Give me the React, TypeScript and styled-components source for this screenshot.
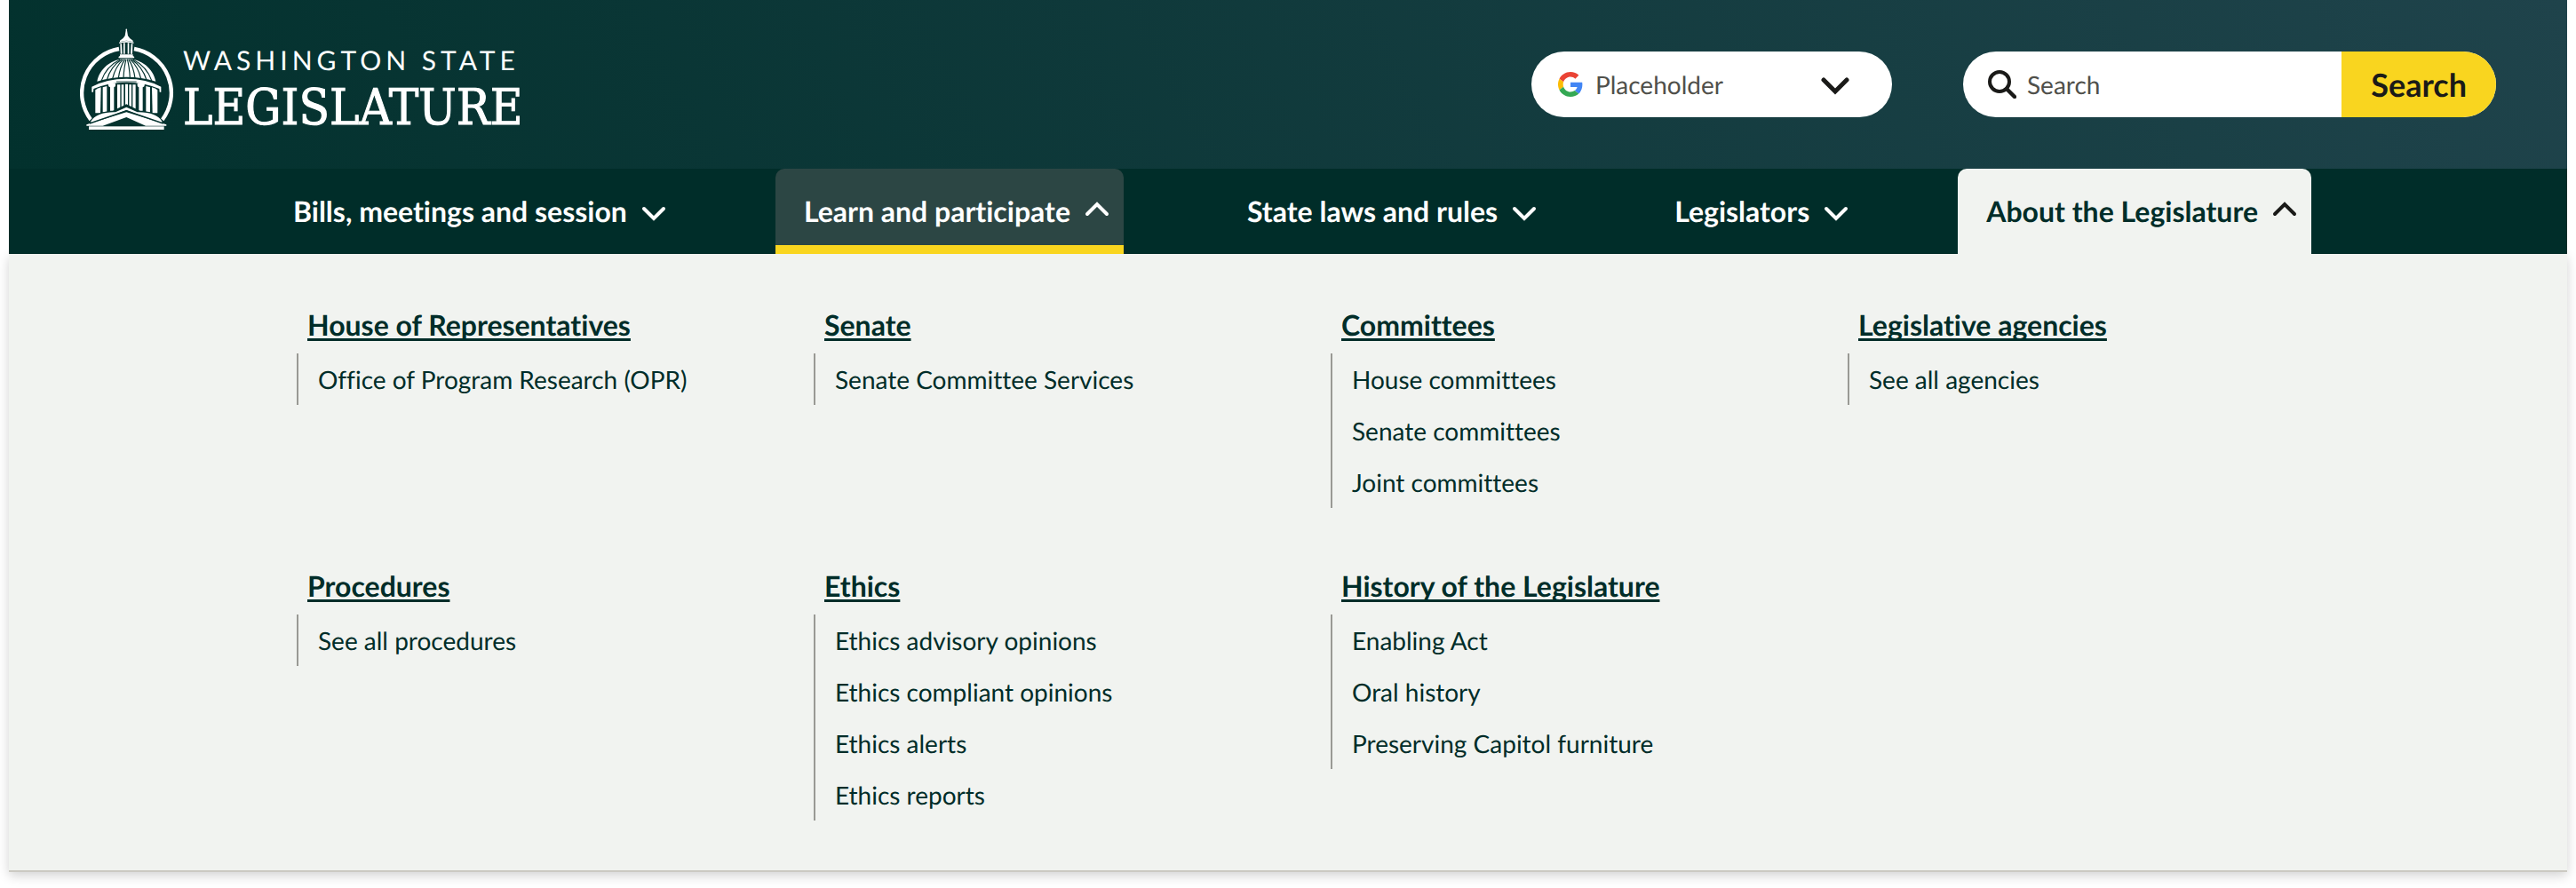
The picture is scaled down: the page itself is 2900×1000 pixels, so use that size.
import React from 'react';
import styled, { createGlobalStyle } from 'styled-components';

const color = {
  deep: '#002d29',
  ink: '#1a1a18',
  muted: '#50504b',
  yellow: '#f9d51f',
  panel: '#f1f3f0',
  hover: '#2c4644',
  rule: '#999994',
  edge: '#cbc9c2',
};

const GlobalStyle = createGlobalStyle`
  *, *::before, *::after { box-sizing: border-box; }
  body {
    margin: 0;
    background: #fff;
    font-family: Lato, 'Liberation Sans', sans-serif;
    font-variant-ligatures: none;
    text-rendering: geometricPrecision;
    color: ${color.deep};
  }
  button, input, select { text-rendering: inherit; }
`;

const Page = styled.div`
  padding: 0 10px 32px;
`;

const Masthead = styled.header`
  display: flex;
  align-items: center;
  gap: 80px;
  height: 190px;
  padding: 0 80px;
  background: linear-gradient(62deg, #02312d, #1f434b);
`;

const Brand = styled.a`
  display: flex;
  align-items: flex-start;
  gap: 10px;
  margin-right: auto;
  padding-bottom: 12px;
  color: #fff;
  text-decoration: none;
`;

const Wordmark = styled.span`
  display: flex;
  flex-direction: column;
  gap: 12px;
  padding-top: 18px;
`;

const WordmarkTop = styled.span`
  font-size: 30px;
  line-height: 36px;
  letter-spacing: 5px;
  white-space: nowrap;
`;

const WordmarkBottom = styled.span`
  font-family: 'DejaVu Serif Condensed', 'Liberation Serif', serif;
  font-size: 56px;
  line-height: 48px;
  -webkit-text-stroke: 1px #fff;
  white-space: nowrap;
`;

const Pill = styled.div`
  display: flex;
  align-items: center;
  height: 74px;
  border-radius: 37px;
  background: #fff;
  overflow: hidden;
`;

const SelectPill = styled(Pill)`
  width: 406px;
  gap: 14px;
  padding: 0 48px 0 30px;
`;

const SearchPill = styled(Pill).attrs({ as: 'form' })`
  width: 600px;
  gap: 12px;
  padding-left: 28px;
`;

const Select = styled.select`
  flex: 1;
  min-width: 0;
  height: 100%;
  padding: 0;
  border: 0;
  appearance: none;
  background: transparent;
  font: 400 28px/34px Lato, sans-serif;
  color: ${color.muted};
`;

const SearchInput = styled.input`
  flex: 1;
  min-width: 0;
  height: 100%;
  padding: 0;
  border: 0;
  outline: 0;
  background: transparent;
  font: 400 28px/34px Lato, sans-serif;
  color: ${color.ink};
  &::placeholder { color: ${color.muted}; opacity: 1; }
`;

const SearchButton = styled.button`
  height: 100%;
  padding: 0 33px;
  border: 0;
  background: ${color.yellow};
  font: 700 36px/44px Lato, sans-serif;
  color: ${color.ink};
`;

const NavBar = styled.nav`
  position: relative;
  background: ${color.deep};
`;

const NavList = styled.ul`
  display: flex;
  justify-content: space-between;
  width: 80%;
  margin: 0 auto;
  padding: 0;
  list-style: none;
`;

type TabState = 'closed' | 'hover' | 'open';

const Tab = styled.button<{ $state: TabState }>`
  display: flex;
  align-items: center;
  gap: 14px;
  height: 96px;
  padding: 0 14px 0 32px;
  border: 0;
  border-radius: ${p => (p.$state === 'closed' ? '0' : '10px 10px 0 0')};
  background: ${p =>
    p.$state === 'open' ? color.panel : p.$state === 'hover' ? color.hover : 'transparent'};
  box-shadow: ${p => (p.$state === 'hover' ? `inset 0 -10px 0 ${color.yellow}` : 'none')};
  color: ${p => (p.$state === 'open' ? color.deep : '#fff')};
  font: 700 32px/40px Lato, sans-serif;
  font-variant-ligatures: none;
  white-space: nowrap;
`;

const ChevronSvg = styled.svg<{ $up?: boolean; $dark?: boolean }>`
  flex: none;
  width: 32px;
  height: 32px;
  fill: none;
  stroke: ${p => (p.$dark ? color.ink : '#fff')};
  transform: ${p => (p.$up ? 'rotate(180deg)' : 'none')};
`;

const Panel = styled.main`
  display: grid;
  grid-template-columns: repeat(4, 1fr);
  gap: 64px 48px;
  padding: 56px 300px;
  border-bottom: 2px solid ${color.edge};
  background: ${color.panel};
  box-shadow: 0 4px 12px rgba(0, 0, 0, 0.18);
`;

const Group = styled.section`
  padding-left: 24px;
`;

const GroupTitle = styled.h2`
  margin: 0 0 8px;
  padding-left: 12px;
  font-size: 32px;
  line-height: 48px;
  white-space: nowrap;
`;

const GroupTitleLink = styled.a`
  color: inherit;
  text-decoration: underline;
  text-decoration-thickness: 3px;
  text-decoration-skip-ink: none;
  text-underline-offset: 3px;
`;

const LinkList = styled.ul`
  margin: 0;
  padding: 0 0 0 22px;
  border-left: 2px solid ${color.rule};
  list-style: none;
`;

const ListLink = styled.a`
  display: block;
  font-size: 28px;
  line-height: 58px;
  white-space: nowrap;
  color: inherit;
  text-decoration: none;
`;

function Chevron({ up, dark, bold }: { up?: boolean; dark?: boolean; bold?: boolean }) {
  return (
    <ChevronSvg viewBox="0 0 32 32" $up={up} $dark={dark} aria-hidden="true">
      <path
        d={bold ? 'M3 11 L16 24 L29 11' : 'M5 13 L16 24 L27 13'}
        strokeWidth={bold ? 5 : 4}
        strokeLinecap="round"
      />
    </ChevronSvg>
  );
}

function GoogleMark() {
  return (
    <svg width="28" height="28" viewBox="0 0 48 48" aria-hidden="true">
      <path fill="#EA4335" d="M24 9.5c3.54 0 6.71 1.22 9.21 3.6l6.85-6.85C35.9 2.38 30.47 0 24 0 14.62 0 6.51 5.38 2.56 13.22l7.98 6.19C12.43 13.72 17.74 9.5 24 9.5z" />
      <path fill="#4285F4" d="M46.98 24.55c0-1.57-.15-3.09-.38-4.55H24v9.02h12.94c-.58 2.96-2.26 5.48-4.78 7.18l7.73 6c4.51-4.18 7.09-10.36 7.09-17.65z" />
      <path fill="#FBBC05" d="M10.53 28.59c-.48-1.45-.76-2.99-.76-4.59s.27-3.14.76-4.59l-7.98-6.19C.92 16.46 0 20.12 0 24c0 3.88.92 7.54 2.56 10.78l7.97-6.19z" />
      <path fill="#34A853" d="M24 48c6.48 0 11.93-2.13 15.89-5.81l-7.73-6c-2.15 1.45-4.92 2.3-8.16 2.3-6.26 0-11.57-4.22-13.47-9.91l-7.98 6.19C6.51 42.62 14.62 48 24 48z" />
    </svg>
  );
}

function Magnifier() {
  return (
    <svg width="32" height="32" viewBox="0 0 32 32" fill="none" stroke={color.ink} aria-hidden="true">
      <circle cx="13" cy="13" r="11" strokeWidth="4" />
      <path d="M21 21 L30 30" strokeWidth="4.5" strokeLinecap="round" />
    </svg>
  );
}

function CapitolDome() {
  const bg = '#05332f';
  return (
    <svg width="106" height="114" viewBox="30 20 318 342" aria-hidden="true">
      <g fill="none" stroke="#fff" strokeWidth="13">
        <path d="M162 89 A151 151 0 0 0 67 329" />
        <path d="M213 89 A151 151 0 0 1 308 329" />
      </g>
      <g fill="#fff">
        <circle cx="187" cy="24" r="2.5" />
        <path d="M185.500 24 h3 L192 45 Q196 54 209 61 V66 Q187 56 165 66 V61 Q178 54 182 45 Z" />
        <path d="M162 67 Q187 57 212 67 L211 71 Q187 63 163 71 Z" />
        <path d="M166 72 h5 l2 34 h-6 Z M177 69 h5 v37 h-5 Z M191 69 h5 v37 h-5 Z M203 72 h5 l-1 34 h-6 Z" />
        <path d="M165 108 h44 v5 q5 1 5 7 h-54 q0 -6 5 -7 Z" />
        <path d="M88 199 C96 157 135 122 187 122 C239 122 278 157 286 199 Q237 184 187 184 Q137 184 88 199 Z" />
        <path d="M70 217 Q120 190 187 190 Q254 190 304 217 L304 235 L299 235 L298 224 Q246 202 187 202 Q128 202 76 224 L75 235 L70 235 Z" />
      </g>
      <g fill="none" stroke={bg} strokeWidth="3.500">
        <path d="M165 126 Q119 148 102 198" />
        <path d="M171 125 Q134 148 121 194" />
        <path d="M177 124 Q149 150 140 190" />
        <path d="M182 124 Q165 150 160 188" />
        <path d="M186 124 Q179 150 177 187" />
        <path d="M190 124 Q197 150 199 187" />
        <path d="M194 124 Q211 150 216 188" />
        <path d="M199 124 Q227 150 236 190" />
        <path d="M204 125 Q240 148 255 194" />
        <path d="M210 126 Q255 148 273 198" />
      </g>
      <g fill="#fff">
        <path d="M82 228 Q90 222 101 219 L99 306 H82 Z" />
        <path d="M107 219 L121 215 V303 H107 Z" />
        <path d="M125 205 H150 V213 Q150 217 145 219 V298 H132 V219 Q126 217 126 213 Z" />
        <path d="M156 210 h10 v86 h-10 Z M170 210 h8 v80 h-8 Z M183 208 h9 v78 h-9 Z M196 210 h8 v80 h-8 Z M208 210 h10 v86 h-10 Z" />
        <path d="M249 205 H224 V213 Q224 217 229 219 V298 H242 V219 Q248 217 248 213 Z" />
        <path d="M267 219 L253 215 V303 H267 Z" />
        <path d="M292 228 Q284 222 273 219 L275 306 H292 Z" />
      </g>
      <path d="M153 200 H221" stroke={bg} strokeWidth="2.500" />
      <path d="M56 342 Q84 298 140 299 L187 276 L234 299 Q290 298 318 342 V350 H56 Z" fill={bg} />
      <g fill="#fff">
        <path d="M66 335 Q86 302 150 303 L187 286 L224 303 Q288 302 308 335 L304 340 L187 296 L70 340 Z" />
        <path d="M52 345 L187 303 L322 345 V349 H252 L187 320 L107 349 H52 Z" />
        <rect x="60" y="351" width="254" height="11" />
      </g>
      <path d="M63 341 L187 298 L311 341" fill="none" stroke={bg} strokeWidth="4" />
    </svg>
  );
}

const tabs: { label: string; state: TabState }[] = [
  { label: 'Bills, meetings and session', state: 'closed' },
  { label: 'Learn and participate', state: 'hover' },
  { label: 'State laws and rules', state: 'closed' },
  { label: 'Legislators', state: 'closed' },
  { label: 'About the Legislature', state: 'open' },
];

const groups: { title: string; links: string[] }[] = [
  { title: 'House of Representatives', links: ['Office of Program Research (OPR)'] },
  { title: 'Senate', links: ['Senate Committee Services'] },
  { title: 'Committees', links: ['House committees', 'Senate committees', 'Joint committees'] },
  { title: 'Legislative agencies', links: ['See all agencies'] },
  { title: 'Procedures', links: ['See all procedures'] },
  {
    title: 'Ethics',
    links: ['Ethics advisory opinions', 'Ethics compliant opinions', 'Ethics alerts', 'Ethics reports'],
  },
  {
    title: 'History of the Legislature',
    links: ['Enabling Act', 'Oral history', 'Preserving Capitol furniture'],
  },
];

export default function App() {
  return (
    <>
      <GlobalStyle />
      <Page>
        <Masthead>
          <Brand href="#">
            <CapitolDome />
            <Wordmark>
              <WordmarkTop>WASHINGTON STATE</WordmarkTop>
              <WordmarkBottom>LEGISLATURE</WordmarkBottom>
            </Wordmark>
          </Brand>
          <SelectPill>
            <GoogleMark />
            <Select aria-label="Language">
              <option>Placeholder</option>
            </Select>
            <Chevron dark bold />
          </SelectPill>
          <SearchPill>
            <Magnifier />
            <SearchInput type="text" aria-label="Search the site" placeholder="Search" />
            <SearchButton type="button">Search</SearchButton>
          </SearchPill>
        </Masthead>
        <NavBar>
          <NavList>
            {tabs.map(tab => (
              <li key={tab.label}>
                <Tab type="button" $state={tab.state} aria-expanded={tab.state === 'open'}>
                  {tab.label}
                  <Chevron up={tab.state !== 'closed'} dark={tab.state === 'open'} />
                </Tab>
              </li>
            ))}
          </NavList>
        </NavBar>
        <Panel>
          {groups.map(group => (
            <Group key={group.title}>
              <GroupTitle>
                <GroupTitleLink href="#">{group.title}</GroupTitleLink>
              </GroupTitle>
              <LinkList>
                {group.links.map(link => (
                  <li key={link}>
                    <ListLink href="#">{link}</ListLink>
                  </li>
                ))}
              </LinkList>
            </Group>
          ))}
        </Panel>
      </Page>
    </>
  );
}
